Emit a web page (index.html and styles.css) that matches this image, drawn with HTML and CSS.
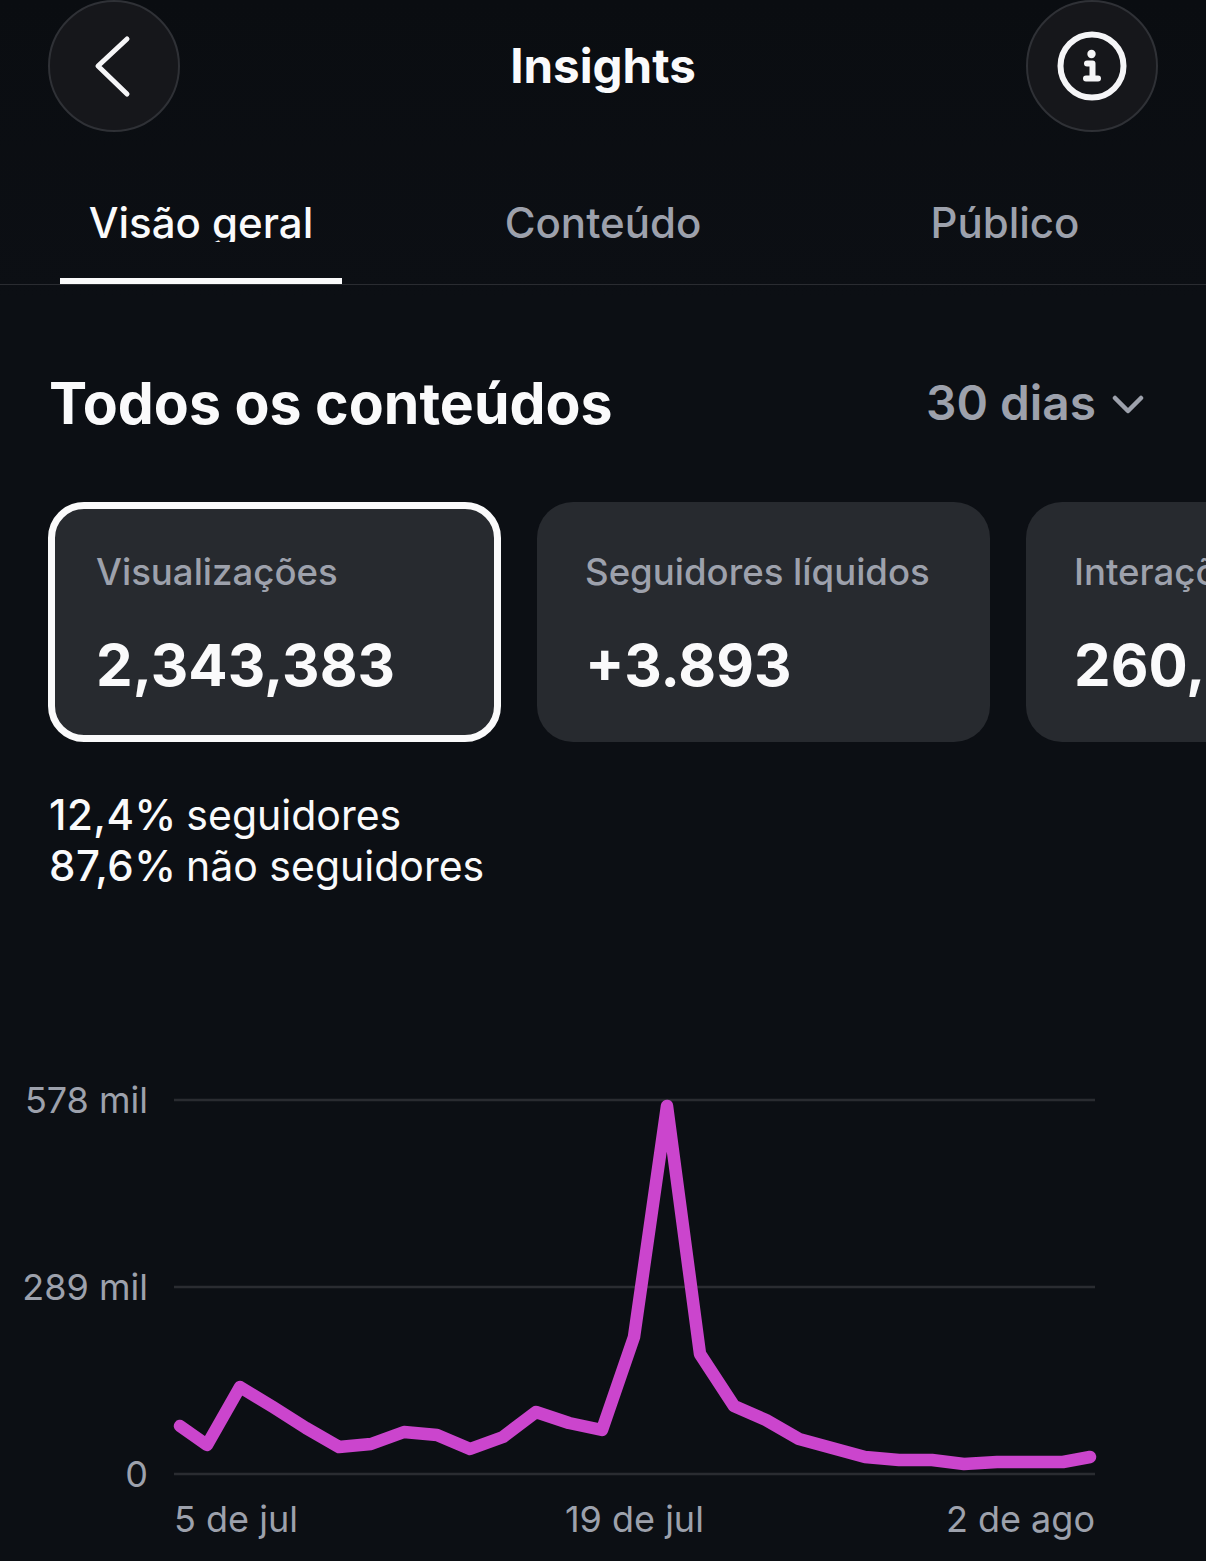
FILE: index.html
```html
<!DOCTYPE html>
<html lang="pt">
<head>
<meta charset="utf-8">
<title>Insights</title>
<link rel="stylesheet" href="styles.css">
</head>
<body>
<div class="screen">
  <header class="topbar">
    <button class="round-btn" aria-label="Voltar">
      <svg class="icon" viewBox="0 0 132 132"><path class="icon-back" d="M79 39 L50 66 L79 94"/></svg>
    </button>
    <h1 class="title">Insights</h1>
    <button class="round-btn" aria-label="Informações">
      <svg class="icon" viewBox="0 0 132 132">
        <circle class="icon-ring" cx="66" cy="66" r="31.5"/>
        <circle class="icon-fill" cx="65.5" cy="54" r="4.2"/>
        <path class="icon-i" d="M61 63.5 H66.5 V78 M60 78.5 H72"/>
      </svg>
    </button>
  </header>

  <nav class="tabs">
    <div class="tab tab-active"><span class="tab-label">Visão geral</span></div>
    <div class="tab"><span class="tab-label">Conteúdo</span></div>
    <div class="tab"><span class="tab-label">Público</span></div>
  </nav>

  <section class="section-head">
    <h2 class="section-title">Todos os conteúdos</h2>
    <div class="range">
      <span>30 dias</span>
      <svg class="chev" viewBox="0 0 32 20"><path d="M3 4 L16 17 L29 4"/></svg>
    </div>
  </section>

  <section class="cards">
    <article class="card card-active">
      <div class="card-label">Visualizações</div>
      <div class="card-value">2,343,383</div>
    </article>
    <article class="card">
      <div class="card-label">Seguidores líquidos</div>
      <div class="card-value">+3.893</div>
    </article>
    <article class="card">
      <div class="card-label">Interações</div>
      <div class="card-value">260,910</div>
    </article>
  </section>

  <section class="split">
    <div><b>12,4%</b> seguidores</div>
    <div><b>87,6%</b> não seguidores</div>
  </section>

  <section class="chart">
    <div class="y-axis">
      <span>578 mil</span>
      <span>289 mil</span>
      <span>0</span>
    </div>
    <svg class="plot" viewBox="0 0 1032 400">
      <line class="grid" x1="0" x2="921" y1="26" y2="26"/>
      <line class="grid" x1="0" x2="921" y1="213" y2="213"/>
      <line class="grid" x1="0" x2="921" y1="400" y2="400"/>
      <polyline class="series" points="6,352 33,371 66,313 99,333 132,354 165,373 197,370 230,358 263,361 296,375 329,363 362,338 395,349 428,356 460,263 493,32 526,280 560,332 592,346 625,365 658,374 691,383 725,386 758,386 790,390 823,388 856,388 889,388 916,383"/>
    </svg>
    <div class="x-axis">
      <span>5 de jul</span>
      <span class="x-mid">19 de jul</span>
      <span class="x-end">2 de ago</span>
    </div>
  </section>
</div>
</body>
</html>
```

FILE: styles.css
```css
* { box-sizing: border-box; }
html, body { margin: 0; padding: 0; background: #0c0f14; }
body { font-family: Inter, "Liberation Sans", sans-serif; color: #fafafb; }
.screen { width: 1206px; height: 1561px; overflow: hidden; background: linear-gradient(#0a0d11, #0c0f14 300px); }

.topbar { height: 132px; padding: 0 48px; display: flex; align-items: center; justify-content: space-between; }
.round-btn { width: 132px; height: 132px; padding: 0; border-radius: 50%; background: #16171b; border: 2px solid #2f3136; display: flex; align-items: center; justify-content: center; }
.icon { width: 132px; height: 132px; flex: none; }
.icon-back { fill: none; stroke: #f5f5f7; stroke-width: 5; stroke-linecap: round; stroke-linejoin: round; }
.icon-ring { fill: none; stroke: #f5f5f7; stroke-width: 6; }
.icon-fill { fill: #f5f5f7; }
.icon-i { fill: none; stroke: #f5f5f7; stroke-width: 6; stroke-linecap: round; stroke-linejoin: round; }
.title { margin: 0; font-size: 47.5px; font-weight: 700; line-height: 54px; }

.tabs { height: 153px; display: grid; grid-template-columns: repeat(3, 1fr); border-bottom: 1px solid #2a2c31; }
.tab { width: 282px; height: 152px; justify-self: center; padding-top: 65px; text-align: center; font-size: 42px; font-weight: 500; color: #9da1ac; }
.tab-label { display: block; height: 52px; line-height: 52px; white-space: nowrap; }
.tab-active { color: #fafafb; border-bottom: 6px solid #fafafb; }
.tab-active .tab-label { height: 45px; overflow: hidden; }

.section-head { margin-top: 84px; padding: 0 62px 0 49px; height: 70px; display: flex; align-items: center; justify-content: space-between; }
.section-title { margin: 0; font-size: 57.2px; font-weight: 700; line-height: 70px; }
.range { display: flex; align-items: center; gap: 16px; margin-top: -3px; font-size: 47.8px; font-weight: 600; color: #9da1ac; }
.chev { width: 32px; height: 20px; margin-top: 2px; }
.chev path { fill: none; stroke: #9da1ac; stroke-width: 4.5; stroke-linecap: round; stroke-linejoin: round; }

.cards { margin-top: 63px; padding-left: 48px; display: flex; gap: 36.5px; }
.card { flex: none; width: 452.5px; height: 240px; padding: 48px 48px 0; border-radius: 36px; background: #272a2f; overflow: hidden; white-space: nowrap; }
.card-active { padding: 41px 41px 0; border: 7px solid #fafafb; }
.card-label { font-size: 36.6px; line-height: 44px; font-weight: 500; color: #9da1ac; }
.card-value { margin-top: 35px; font-size: 58.2px; line-height: 72px; font-weight: 700; }

.split { margin-top: 48px; padding-left: 49px; font-size: 41px; line-height: 51px; }
.split b { margin-right: -2px; font-size: 42px; line-height: 1; font-weight: 500; letter-spacing: 0.5px; }

.chart { margin-top: 182px; display: grid; grid-template-columns: 174px 1032px; grid-template-rows: 400px auto; }
.y-axis { padding: 0 26px 0 0; display: flex; flex-direction: column; justify-content: space-between; align-items: flex-end; height: 424px; margin-top: 1px; font-size: 36px; line-height: 50px; color: #9da1ac; }
.plot { width: 1032px; height: 400px; overflow: visible; display: block; }
.grid { stroke: #2a2c31; stroke-width: 2.5; }
.series { fill: none; stroke: #cb45cd; stroke-width: 12.5; stroke-linecap: round; stroke-linejoin: round; }
.x-axis { grid-column: 2; width: 921px; margin-top: 20px; display: flex; font-size: 36px; line-height: 50px; color: #9da1ac; }
.x-mid { margin-left: 267px; }
.x-end { margin-left: auto; }
```
